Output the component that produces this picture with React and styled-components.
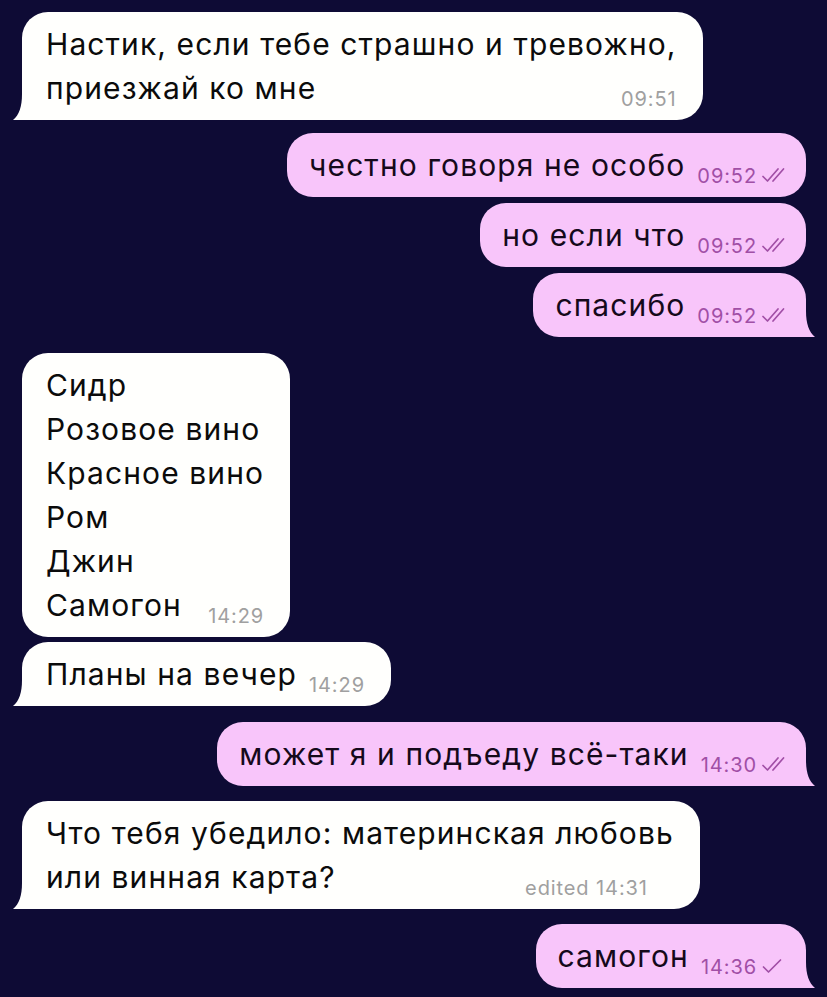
import React from 'react';
import styled, { createGlobalStyle } from 'styled-components';

const GlobalStyle = createGlobalStyle`
    html, body {
        margin: 0;
        padding: 0;
        background: #0e0b35;
    }

    body {
        font-family: Inter, "Noto Sans", sans-serif;
        -webkit-font-smoothing: antialiased;
    }
`;

const IN_BG = '#fffffd';
const OUT_BG = '#f8c5fa';

const Chat = styled.div`
    width: 827px;
    min-height: 997px;
    box-sizing: border-box;
    padding: 12px 21px 0 22px;
    display: flex;
    flex-direction: column;
    background: #0e0b35;
`;

const Row = styled.div`
    display: flex;
    justify-content: ${p => (p.$out ? 'flex-end' : 'flex-start')};
    margin-top: ${p => p.$gap}px;
`;

const Bubble = styled.div`
    position: relative;
    background: ${p => (p.$out ? OUT_BG : IN_BG)};
    color: ${p => (p.$out ? '#15091b' : '#0b0b0b')};
    border-radius: 26px;
    ${p => p.$tail && (p.$out ? 'border-bottom-right-radius: 0;' : 'border-bottom-left-radius: 0;')}
    padding: 10px ${p => (p.$out ? 18 : 26)}px 10px ${p => (p.$out ? 22 : 24)}px;
    font-size: 30px;
    line-height: 44px;
    letter-spacing: 1.1px;
`;

const Line = styled.div`
    display: flex;
    align-items: flex-end;
    white-space: nowrap;
`;

const Meta = styled.span`
    margin-left: auto;
    margin-right: ${p => p.$inset || 0}px;
    padding-left: 12px;
    display: inline-flex;
    align-items: baseline;
    gap: 4px;
    font-size: 20px;
    line-height: 22px;
    letter-spacing: 0.9px;
    color: ${p => (p.$out ? '#a14fa6' : '#a0a0a0')};
`;

const Tail = styled.svg`
    position: absolute;
    bottom: 0;
    ${p => (p.$out ? 'right: -9px; transform: scaleX(-1);' : 'left: -9px;')}
`;

// read marks after the time
const Checks = ({ double }) => (
    <svg width="27" height="16" viewBox="0 0 27 16" fill="none" stroke="currentColor"
        strokeWidth="1.7" strokeLinecap="round" strokeLinejoin="round">
        {double ? (
            <>
                <path d="M2 9.5 L6.5 14 L17 2" />
                <path d="M12 14 L22.5 2" />
            </>
        ) : (
            <path d="M2.5 9 L7.5 14 L19.5 2" />
        )}
    </svg>
);

const messages = [
    { out: false, gap: 0, lines: ['Настик, если тебе страшно и тревожно,', 'приезжай ко мне'], time: '09:51', tail: true },
    { out: true, gap: 13, lines: ['честно говоря не особо'], time: '09:52', checks: 2 },
    { out: true, gap: 6, lines: ['но если что'], time: '09:52', checks: 2 },
    { out: true, gap: 6, lines: ['спасибо'], time: '09:52', checks: 2, tail: true },
    { out: false, gap: 16, lines: ['Сидр', 'Розовое вино', 'Красное вино', 'Ром', 'Джин', 'Самогон'], time: '14:29' },
    { out: false, gap: 5, lines: ['Планы на вечер'], time: '14:29', tail: true },
    { out: true, gap: 16, lines: ['может я и подъеду всё-таки'], time: '14:30', checks: 2, tail: true },
    { out: false, gap: 15, lines: ['Что тебя убедило: материнская любовь', 'или винная карта?'], time: 'edited 14:31', tail: true, inset: 26 },
    { out: true, gap: 15, lines: ['самогон'], time: '14:36', checks: 1, tail: true },
];

const Message = ({ msg }) => {
    const last = msg.lines.length - 1;

    return (
        <Row $out={msg.out} $gap={msg.gap}>
            <Bubble $out={msg.out} $tail={msg.tail}>
                {msg.lines.map((text, i) => (
                    <Line key={i}>
                        <span>{text}</span>
                        {i === last && (
                            <Meta $out={msg.out} $inset={msg.inset}>
                                {msg.time}
                                {msg.checks ? <Checks double={msg.checks === 2} /> : null}
                            </Meta>
                        )}
                    </Line>
                ))}

                {/* bubble tail */}
                {msg.tail && (
                    <Tail $out={msg.out} width="22" height="26" viewBox="0 0 22 26">
                        <path d="M9 0 C9 13 6 21 0 26 L22 26 L22 0 Z" fill={msg.out ? OUT_BG : IN_BG} />
                    </Tail>
                )}
            </Bubble>
        </Row>
    );
};

const App = () => {
    return (
        <>
            <GlobalStyle />
            <Chat>
                {messages.map((m, i) => <Message key={i} msg={m} />)}
            </Chat>
        </>
    );
};

export default App;
